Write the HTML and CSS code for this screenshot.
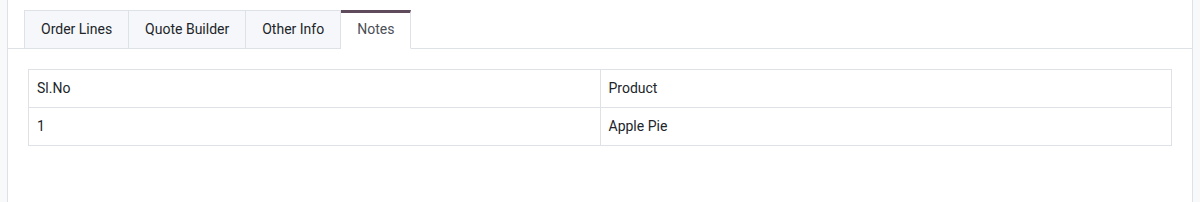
FILE: index.html
```html
<!DOCTYPE html>
<html lang="en">
<head>
    <meta charset="UTF-8">
    <title>Notes</title>
    <link rel="stylesheet" href="styles.css">
</head>
<body>

<div class="page">
    <div class="gutter"></div>
    <div class="sheet">
        <ul class="tabs">
            <li class="tab">Order Lines</li>
            <li class="tab">Quote Builder</li>
            <li class="tab">Other Info</li>
            <li class="tab active">Notes</li>
        </ul>

        <table class="lines">
            <tr>
                <td>Sl.No</td>
                <td>Product</td>
            </tr>
            <tr>
                <td>1</td>
                <td>Apple Pie</td>
            </tr>
        </table>
    </div>
    <div class="gutter"></div>
</div>

</body>
</html>
```

FILE: styles.css
```css
body {
    margin: 0;
    font-family: Roboto, "Liberation Sans", sans-serif;
    font-size: 14px;
    color: #212529;
    background-color: #f8f9fa;
}
.page {
    display: flex;
    height: 202px;
}
.gutter {
    width: 7px;
    flex: none;
}
.sheet {
    flex: 1;
    background: white;
    border-left: 1px solid #dee2e6;
    border-right: 1px solid #dee2e6;
    padding-top: 10px;
}
.tabs {
    display: flex;
    list-style: none;
    margin: 0;
    padding: 0 0 0 16px;
    border-bottom: 1px solid #dee2e6;
}
.tab {
    height: 39px;
    line-height: 36px;
    box-sizing: border-box;
    padding: 0 16px;
    margin-bottom: -1px;
    background-color: #f6f7fa;
    border: 1px solid #dee2e6;
    border-left: none;
}
.tab:first-child {
    border-left: 1px solid #dee2e6;
}
.tab.active {
    background: white;
    color: #4c5057;
    border-top: 3px solid #5f4b5b;
    border-bottom-color: white;
    line-height: 33px;
}
.lines {
    width: calc(100% - 40px);
    margin: 20px 0 0 20px;
    border-collapse: collapse;
}
.lines td {
    width: 50%;
    border: 1px solid #dee2e6;
    height: 38px;
    padding: 0 8px 2px;
    box-sizing: border-box;
}
```
